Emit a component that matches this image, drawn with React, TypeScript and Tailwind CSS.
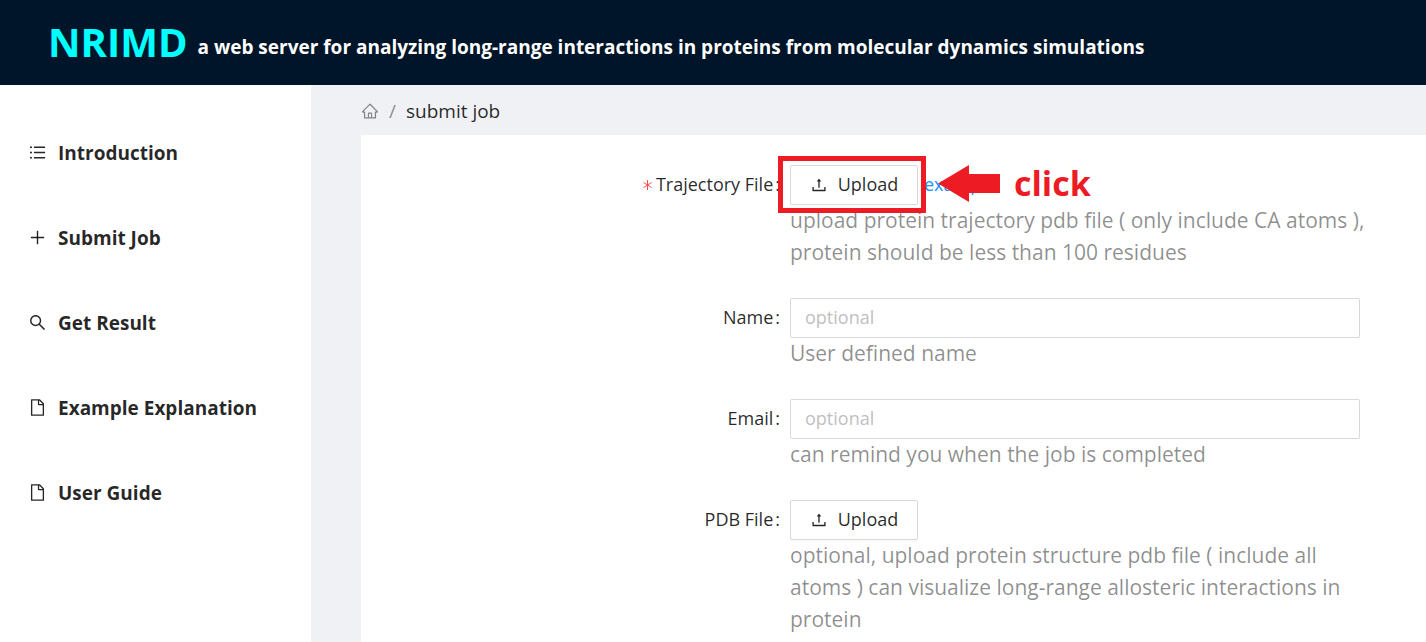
import type { ReactNode } from "react";
import {
  AiOutlineFile,
  AiOutlineHome,
  AiOutlinePlus,
  AiOutlineSearch,
  AiOutlineUnorderedList,
  AiOutlineUpload,
} from "react-icons/ai";

const menu = [
  { label: "Introduction", Icon: AiOutlineUnorderedList },
  { label: "Submit Job", Icon: AiOutlinePlus },
  { label: "Get Result", Icon: AiOutlineSearch },
  { label: "Example Explanation", Icon: AiOutlineFile },
  { label: "User Guide", Icon: AiOutlineFile },
];

function Row({
  id,
  label,
  required,
  help,
  children,
}: {
  id: string;
  label: string;
  required?: boolean;
  help: string;
  children: ReactNode;
}) {
  return (
    <div className="grid grid-cols-[minmax(0,429fr)_minmax(0,570fr)]">
      <label
        htmlFor={id}
        className="flex h-[38px] items-center justify-end pr-2.5 text-lg text-black/85"
      >
        {required && (
          <svg
            width="9"
            height="10"
            viewBox="0 0 9 10"
            className="mt-0.5 mr-1 text-[#ff4d4f]"
            fill="none"
            stroke="currentColor"
            aria-hidden="true"
          >
            <path d="M4.500 0 V10 M0.500 2.500 L8.500 7.500 M8.500 2.500 L0.500 7.500" />
          </svg>
        )}
        {label}
        <span className="ml-0.5">:</span>
      </label>
      <div>
        <div className="flex h-10 items-center">{children}</div>
        <p className="-mt-px -mr-2 text-[21px] leading-8 whitespace-pre-line text-black/45">
          {help}
        </p>
      </div>
    </div>
  );
}

function UploadButton({ id }: { id: string }) {
  return (
    <button
      id={id}
      type="button"
      className="flex h-10 w-32 items-center justify-center gap-2.5 rounded-xs border border-[#d9d9d9] bg-white pb-0.5 text-lg text-black/85 shadow-[0_2px_0_rgba(0,0,0,0.02)]"
    >
      <AiOutlineUpload size={18} className="mt-0.5" />
      Upload
    </button>
  );
}

function TextField({ id }: { id: string }) {
  return (
    <input
      id={id}
      type="text"
      placeholder="optional"
      className="h-10 w-full rounded-xs border border-[#d9d9d9] bg-white px-3.5 pb-0.5 text-lg text-black/85 placeholder:text-[#bfbfbf]"
    />
  );
}

function ClickHint() {
  return (
    <>
      <span className="pointer-events-none absolute -top-[9px] -right-2 -bottom-2 -left-3 z-10 border-5 border-[#ed1c24]" />
      <span className="pointer-events-none absolute top-0 left-full z-10 ml-5 flex h-9 items-center gap-3.5 text-[34px] font-bold text-[#ed1c24]">
        <svg width="62" height="37" viewBox="0 0 62 37" fill="currentColor" aria-hidden="true">
          <path d="M0 18.500 L31 0 V9 H62 V28 H31 V37 Z" />
        </svg>
        click
      </span>
    </>
  );
}

export default function App() {
  return (
    <div className="flex h-screen flex-col overflow-hidden bg-[#f0f2f5] font-['Open_Sans','Noto_Sans',sans-serif]">
      <header className="flex h-[85px] shrink-0 items-start gap-2.5 bg-[#001529] px-12 pt-4 font-bold whitespace-nowrap text-white">
        <h1 className="text-[40px] leading-[52px] text-[#00ffff]">NRIMD</h1>
        <p className="text-[19px] leading-[62px]">
          a web server for analyzing long-range interactions in proteins from molecular dynamics
          simulations
        </p>
      </header>
      <div className="flex min-h-0 flex-1">
        <nav className="w-[311px] shrink-0 bg-white pt-[43px]">
          <ul className="flex flex-col gap-[35px]">
            {menu.map(({ label, Icon }) => (
              <li key={label}>
                <a
                  href="#"
                  className="flex h-[50px] items-center gap-[11px] pl-7 text-[19px] font-bold text-black/85"
                >
                  <Icon size={19} className="mb-0.5" />
                  {label}
                </a>
              </li>
            ))}
          </ul>
        </nav>
        <main className="flex min-w-0 flex-1 flex-col bg-[#f0f1f5] pl-[50px]">
          <nav
            aria-label="Breadcrumb"
            className="flex h-[50px] shrink-0 items-center gap-2.5 pt-0.5 text-[19px]"
          >
            <a href="#" aria-label="Home" className="text-black/45">
              <AiOutlineHome size={18} />
            </a>
            <span className="text-black/45">/</span>
            <span className="text-black/85">submit job</span>
          </nav>
          <form className="flex flex-1 flex-col gap-[30px] bg-white pt-[30px] pr-[66px]">
            <Row
              id="trajectory"
              label="Trajectory File"
              required
              help={
                "upload protein trajectory pdb file ( only include CA atoms ),\nprotein should be less than 100 residues"
              }
            >
              <div className="relative">
                <UploadButton id="trajectory" />
                <ClickHint />
              </div>
              <a href="#" className="ml-1.5 pb-0.5 text-lg text-[#1890ff]">
                example
              </a>
            </Row>
            <Row id="name" label="Name" help="User defined name">
              <TextField id="name" />
            </Row>
            <Row id="email" label="Email" help="can remind you when the job is completed">
              <TextField id="email" />
            </Row>
            <Row
              id="pdb"
              label="PDB File"
              help={
                "optional, upload protein structure pdb file ( include all\natoms ) can visualize long-range allosteric interactions in protein"
              }
            >
              <UploadButton id="pdb" />
            </Row>
          </form>
        </main>
      </div>
    </div>
  );
}
